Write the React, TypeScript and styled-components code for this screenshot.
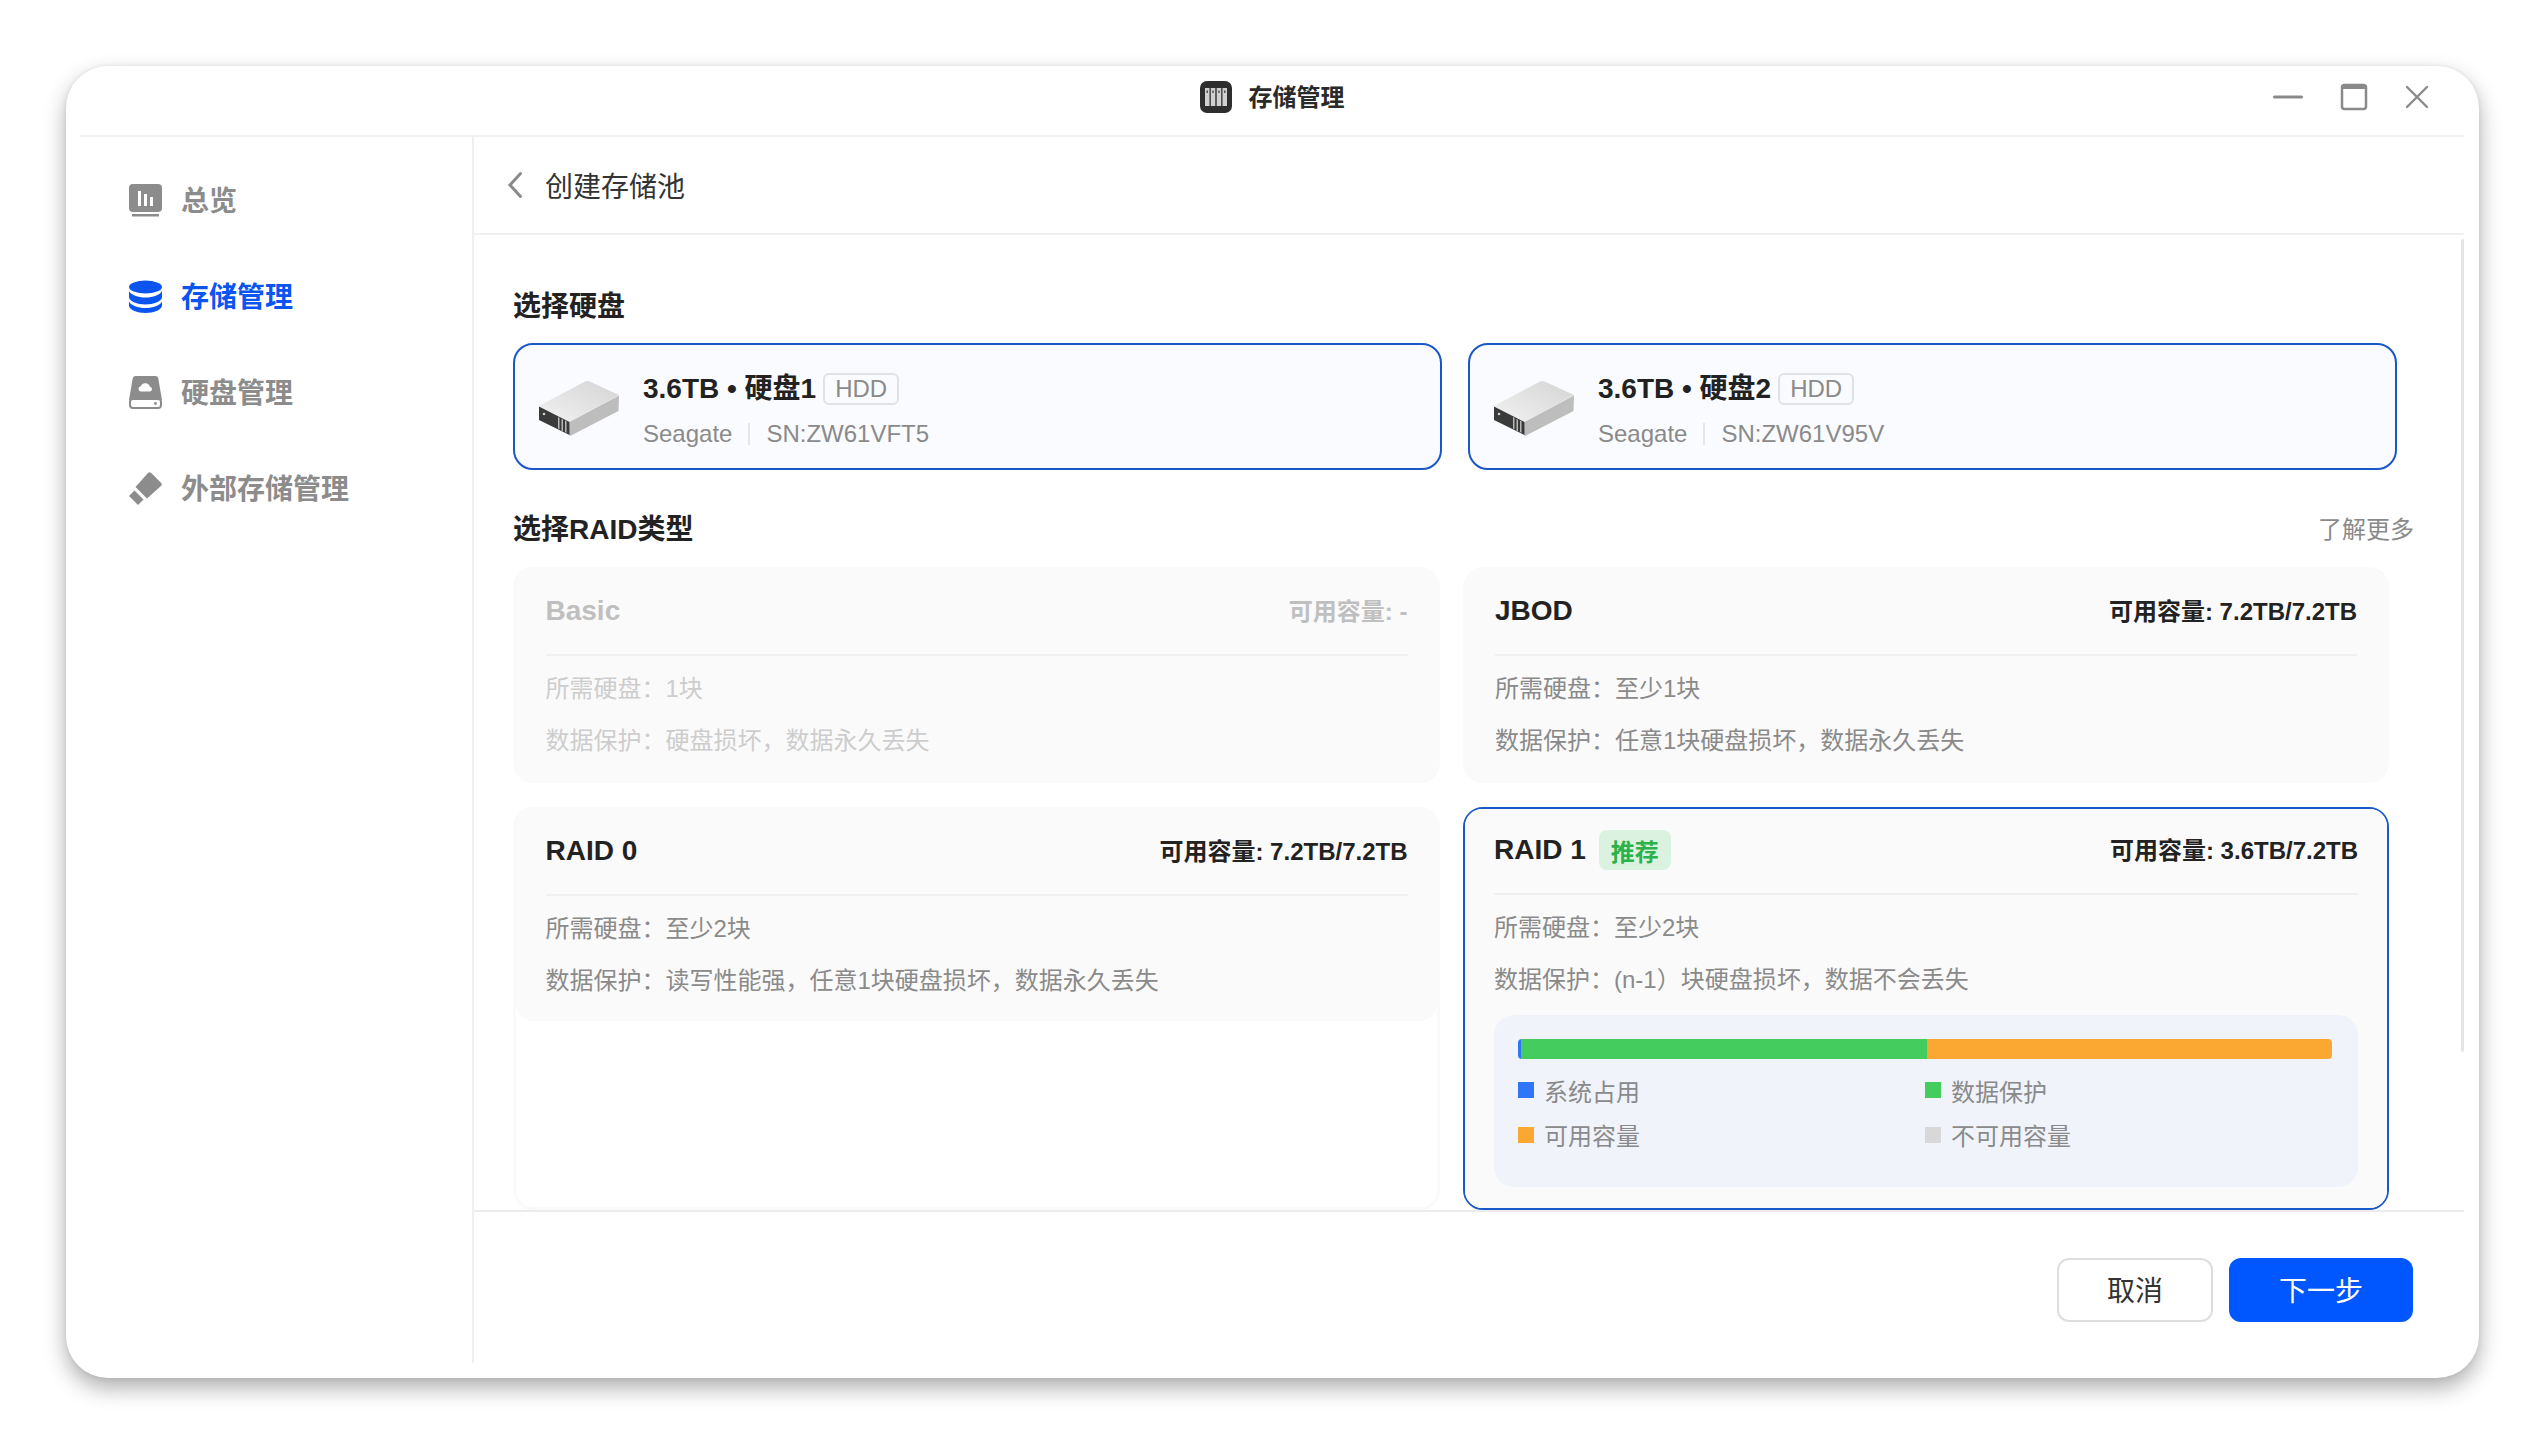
import React from 'react';
import styled, { createGlobalStyle } from 'styled-components';

const GlobalStyle = createGlobalStyle`
  html, body {
    margin: 0;
    background: #fff;
  }
  * {
    box-sizing: border-box;
  }
  body {
    font-family: "Liberation Sans", "Noto Sans CJK SC", sans-serif;
    color: #222;
  }
`;

const Page = styled.div`
  width: 2545px;
  height: 1444px;
  padding: 66px 0 0 66px;
`;

const Window = styled.div`
  width: 2413px;
  height: 1312px;
  padding: 0 15px 15px 14px;
  display: flex;
  flex-direction: column;
  background: #fff;
  border-radius: 42px;
  box-shadow: 0 10px 22px rgba(0, 0, 0, 0.32), 0 0 4px rgba(0, 0, 0, 0.08);
`;

const TitleBar = styled.header`
  position: relative;
  height: 71px;
  flex: none;
  display: flex;
  align-items: center;
  justify-content: center;
  gap: 17px;
  padding-bottom: 7px;
  border-bottom: 2px solid #f0f0f0;
`;

const TitleText = styled.span`
  margin-bottom: 4px;
  font-size: 24px;
  font-weight: 600;
  color: #2a2a2a;
`;

const WindowControls = styled.div`
  position: absolute;
  right: 0;
  top: 16px;
  display: flex;
  align-items: center;
  gap: 37px;
  padding-right: 35px;
`;

const Columns = styled.div`
  flex: 1;
  min-height: 0;
  display: flex;
`;

const Sidebar = styled.nav`
  width: 394px;
  flex: none;
  padding: 15px 0 0 49px;
  border-right: 2px solid #f0f0f0;
`;

const NavItem = styled.div<{ $active?: boolean }>`
  height: 96px;
  display: flex;
  align-items: center;
  gap: 19px;
  font-size: 28px;
  font-weight: 600;
  color: ${(p) => (p.$active ? '#0a55f0' : '#8c8c8c')};
`;

const NavLabel = styled.span`
  margin-bottom: 3px;
`;

const Main = styled.main`
  position: relative;
  flex: 1;
  min-width: 0;
  display: flex;
  flex-direction: column;
`;

const SubHeader = styled.div`
  height: 98px;
  flex: none;
  display: flex;
  align-items: center;
  gap: 22px;
  padding: 0 0 0 33px;
  font-size: 28px;
  color: #333;
  border-bottom: 2px solid #f0f0f0;
`;

const Content = styled.div`
  height: 975px;
  flex: none;
  overflow: hidden;
  padding: 49px 50px 0 39px;
`;

const ScrollThumb = styled.div`
  position: absolute;
  right: 0;
  top: 102px;
  width: 3px;
  height: 813px;
  border-radius: 2px;
  background: #e4e4e4;
`;

const SectionHead = styled.div`
  height: 40px;
  display: flex;
  align-items: center;
  justify-content: space-between;
`;

const SectionTitle = styled.h2`
  margin: 0;
  font-size: 28px;
  font-weight: 600;
  color: #222;
`;

const LearnMore = styled.span`
  font-size: 24px;
  color: #8a8a8a;
`;

const DiskGrid = styled.div`
  display: grid;
  grid-template-columns: 1fr 1fr;
  gap: 26px;
  margin: 19px 17px 37px 0;
`;

const DiskCard = styled.div`
  height: 127px;
  display: flex;
  align-items: center;
  gap: 13px;
  padding: 6px 0 0 15px;
  background: #fafbff;
  border: 2.5px solid #1a57c8;
  border-radius: 20px;
`;

const DiskInfo = styled.div`
  display: flex;
  flex-direction: column;
  gap: 13.5px;
  margin-top: -5px;
`;

const DiskName = styled.div`
  display: flex;
  align-items: center;
  gap: 7px;
  font-size: 28px;
  font-weight: 700;
  color: #222;
`;

const TypeTag = styled.span`
  width: 76px;
  height: 32px;
  margin-top: 6px;
  display: flex;
  align-items: center;
  justify-content: center;
  font-size: 24px;
  font-weight: 400;
  color: #8a8a8a;
  border: 2px solid #e0e2e6;
  border-radius: 6px;
`;

const DiskMeta = styled.div`
  display: flex;
  align-items: center;
  font-size: 24px;
  color: #8a8a8a;
`;

const MetaDivider = styled.span`
  width: 2px;
  height: 22px;
  margin: 0 16px;
  background: #e6e6e6;
`;

const RaidGrid = styled.div`
  display: grid;
  grid-template-columns: 1fr 1fr;
  grid-template-rows: 216px 403px;
  gap: 24px 23px;
  margin: 20px 25px 0 0;
`;

const RaidCard = styled.div<{ $selected?: boolean }>`
  display: flex;
  flex-direction: column;
  background: #fff;
  border: ${(p) => (p.$selected ? '2.5px solid #1a57c8' : '3px solid #fafafa')};
  border-radius: 20px;
`;

const RaidBody = styled.div<{ $fill?: boolean }>`
  flex: ${(p) => (p.$fill ? 1 : 'none')};
  padding: 0 29px 14px 29.5px;
  background: #fafafa;
  border-radius: 17px;
`;

const RaidHead = styled.div<{ $muted?: boolean }>`
  height: 86px;
  padding-bottom: 2px;
  display: flex;
  align-items: center;
  justify-content: space-between;
  border-bottom: 2px solid #f0f0f0;
  color: ${(p) => (p.$muted ? '#bfbfbf' : '#222')};
`;

const RaidName = styled.div`
  display: flex;
  align-items: center;
  gap: 13px;
  font-size: 28px;
  font-weight: 700;
`;

const Recommend = styled.span`
  width: 72px;
  height: 40px;
  display: flex;
  align-items: center;
  justify-content: center;
  font-size: 24px;
  font-weight: 700;
  color: #2bb24c;
  background: #dcf2e0;
  border-radius: 8px;
`;

const Capacity = styled.span`
  margin-bottom: 4px;
  font-size: 24px;
  font-weight: 700;
`;

const RaidRows = styled.div`
  padding-top: 7px;
`;

const RaidRow = styled.div<{ $muted?: boolean }>`
  height: 52px;
  line-height: 52px;
  font-size: 24px;
  color: ${(p) => (p.$muted ? '#cdcdcd' : '#8a8a8a')};
`;

const UsagePanel = styled.div`
  height: 172px;
  margin-top: 9px;
  padding: 24px 26px 24px 24px;
  background: #f0f3fa;
  border-radius: 20px;
`;

const UsageBar = styled.div`
  height: 20px;
  display: flex;
  overflow: hidden;
  border-radius: 4px;
`;

const UsageSegment = styled.div<{ $color: string }>`
  background: ${(p) => p.$color};
`;

const Legend = styled.div`
  display: grid;
  grid-template-columns: 407px 1fr;
  grid-auto-rows: 44.5px;
  margin-top: 9px;
`;

const LegendItem = styled.div`
  display: flex;
  align-items: center;
  gap: 10px;
  font-size: 24px;
  color: #8a8a8a;
`;

const LegendSwatch = styled.i<{ $color: string }>`
  width: 16px;
  height: 16px;
  background: ${(p) => p.$color};
`;

const Footer = styled.footer`
  flex: 1;
  display: flex;
  justify-content: flex-end;
  gap: 16px;
  padding: 46px 51px 0 0;
  border-top: 2px solid #ececec;
`;

const Button = styled.button<{ $primary?: boolean }>`
  width: ${(p) => (p.$primary ? '184px' : '156px')};
  height: 64px;
  padding: 0 0 3px;
  font-family: inherit;
  font-size: 28px;
  color: ${(p) => (p.$primary ? '#fff' : '#333')};
  background: ${(p) => (p.$primary ? '#0057ff' : '#fff')};
  border: ${(p) => (p.$primary ? 'none' : '2px solid #dedede')};
  border-radius: 12px;
`;

const OverviewIcon = () => (
  <svg width="33" height="33" viewBox="0 0 33 33">
    <rect width="33" height="28" rx="4" fill="#8c8c8c" />
    <path d="M9 7h3v15H9zM15 10h3v12h-3zM21 13h3v9h-3z" fill="#fff" />
    <rect x="3" y="30" width="27" height="2.5" fill="#8c8c8c" />
  </svg>
);

const StorageIcon = () => (
  <svg width="33" height="33" viewBox="0 0 33 33" fill="#0a55f0">
    <ellipse cx="16.5" cy="7" rx="16.5" ry="6.5" />
    <path d="M0 11c2 4 9 6.500 16.500 6.500S31 15 33 11v6.500c-1 4-8 7-16.500 7S1 21.500 0 17.500z" />
    <path d="M0 21.500c2 4 9 6.500 16.500 6.500S31 25.500 33 21.500V26c-1 4-8 7-16.500 7S1 30 0 26z" />
  </svg>
);

const DiskIcon = () => (
  <svg width="33" height="33" viewBox="0 0 33 33">
    <path d="M6.500 0h20c1.500 0 2.500 1 2.800 2.500L33 24H0L3.700 2.500C4 1 5 0 6.500 0z" fill="#8c8c8c" />
    <path d="M11.500 15.500a2.700 2.700 0 0 1 .3-5.300 4.800 4.800 0 0 1 9.100.6 2.400 2.400 0 0 1 .3 4.700z" fill="#fff" />
    <rect x="1" y="23" width="31" height="9" rx="3" fill="#fff" stroke="#8c8c8c" strokeWidth="2" />
    <circle cx="26.500" cy="27.500" r="1.400" fill="#8c8c8c" />
  </svg>
);

const UsbIcon = () => (
  <svg width="33" height="33" viewBox="0 0 33 33" fill="#8c8c8c">
    <path d="M22 0.800 32.200 11c.8.800.8 2 0 2.800L18 26.500 6.500 15 19.200.800c.8-.8 2-.8 2.800 0z" />
    <path d="M5.500 18.500 14.500 27.500 9 33 0 24z" />
  </svg>
);

const AppIcon = () => (
  <svg width="32" height="32" viewBox="0 0 32 32">
    <rect width="32" height="32" rx="7" fill="#2e2e2e" />
    <path d="M5 7h4.500v18H5zM10.800 7h4.500v18h-4.500zM16.700 7h4.500v18h-4.500zM22.500 7H27v18h-4.500z" fill="#d0d0d0" />
    <path d="M6.500 9.500h1.500v2.500H6.500zM12.300 9.500h1.500v2.500h-1.500zM18.200 9.500h1.500v2.500h-1.500zM24 9.500h1.500v2.500H24z" fill="#555" />
  </svg>
);

const MinimizeIcon = () => (
  <svg width="30" height="30" viewBox="0 0 30 30">
    <path d="M1.500 15h27" stroke="#8a8a8a" strokeWidth="3" strokeLinecap="round" />
  </svg>
);

const MaximizeIcon = () => (
  <svg width="28" height="30" viewBox="0 0 28 30">
    <rect x="2" y="3" width="24" height="24" rx="2.500" fill="none" stroke="#8a8a8a" strokeWidth="2.500" />
    <rect x="2" y="3" width="24" height="4" fill="#8a8a8a" />
  </svg>
);

const CloseIcon = () => (
  <svg width="24" height="30" viewBox="0 0 24 30">
    <path d="M2 5l20 20M22 5L2 25" stroke="#8a8a8a" strokeWidth="2.400" strokeLinecap="round" />
  </svg>
);

const BackIcon = () => (
  <svg width="16" height="28" viewBox="0 0 16 28">
    <path d="M13.500 2.500 3 14l10.500 11.500" fill="none" stroke="#8a8a8a" strokeWidth="3" strokeLinecap="round" />
  </svg>
);

const DriveImage = () => (
  <svg width="100" height="70" viewBox="0 0 100 70">
    <defs>
      <linearGradient id="driveTop" x1="0" y1="1" x2="1" y2="0">
        <stop offset="0" stopColor="#f2f2f2" />
        <stop offset="1" stopColor="#d4d4d4" />
      </linearGradient>
    </defs>
    <path d="M9 31 55 6.500c1.500-.8 3-.8 4.500 0L89 20 39.500 47z" fill="url(#driveTop)" />
    <path d="M39.500 47 89 20.500 88.500 36 41 60.500c-1.500.5-2 .3-2-1z" fill="#bdbdbd" />
    <path d="M9 31.500 39.500 47v13L9 45z" fill="#3a3a3a" />
    <path d="M28 42l1.500.8v11.500l-1.500-.8zM31.500 44l1.500.8v11.500l-1.500-.8zM35 45.500l1.500.8v11.500l-1.500-.8z" fill="#b8b8b8" />
    <circle cx="14" cy="39" r="1.300" fill="#cfcfcf" />
  </svg>
);

const disks = [
  { name: '3.6TB • 硬盘1', sn: 'SN:ZW61VFT5' },
  { name: '3.6TB • 硬盘2', sn: 'SN:ZW61V95V' },
];

const legend = [
  { label: '系统占用', color: '#2f76f6' },
  { label: '数据保护', color: '#45cc5e' },
  { label: '可用容量', color: '#fba833' },
  { label: '不可用容量', color: '#d8d8d8' },
];

const App: React.FunctionComponent = () => (
  <>
    <GlobalStyle />
    <Page>
      <Window>
        <TitleBar>
          <AppIcon />
          <TitleText>存储管理</TitleText>
          <WindowControls>
            <MinimizeIcon />
            <MaximizeIcon />
            <CloseIcon />
          </WindowControls>
        </TitleBar>
        <Columns>
          <Sidebar>
            <NavItem>
              <OverviewIcon />
              <NavLabel>总览</NavLabel>
            </NavItem>
            <NavItem $active>
              <StorageIcon />
              <NavLabel>存储管理</NavLabel>
            </NavItem>
            <NavItem>
              <DiskIcon />
              <NavLabel>硬盘管理</NavLabel>
            </NavItem>
            <NavItem>
              <UsbIcon />
              <NavLabel>外部存储管理</NavLabel>
            </NavItem>
          </Sidebar>
          <Main>
            <SubHeader>
              <BackIcon />
              创建存储池
            </SubHeader>
            <ScrollThumb />
            <Content>
              <SectionHead>
                <SectionTitle>选择硬盘</SectionTitle>
              </SectionHead>
              <DiskGrid>
                {disks.map((disk) => (
                  <DiskCard key={disk.sn}>
                    <DriveImage />
                    <DiskInfo>
                      <DiskName>
                        {disk.name}
                        <TypeTag>HDD</TypeTag>
                      </DiskName>
                      <DiskMeta>
                        Seagate
                        <MetaDivider />
                        {disk.sn}
                      </DiskMeta>
                    </DiskInfo>
                  </DiskCard>
                ))}
              </DiskGrid>
              <SectionHead>
                <SectionTitle>选择RAID类型</SectionTitle>
                <LearnMore>了解更多</LearnMore>
              </SectionHead>
              <RaidGrid>
                <RaidCard>
                  <RaidBody $fill>
                    <RaidHead $muted>
                      <RaidName>Basic</RaidName>
                      <Capacity>可用容量: -</Capacity>
                    </RaidHead>
                    <RaidRows>
                      <RaidRow $muted>所需硬盘：1块</RaidRow>
                      <RaidRow $muted>数据保护：硬盘损坏，数据永久丢失</RaidRow>
                    </RaidRows>
                  </RaidBody>
                </RaidCard>
                <RaidCard>
                  <RaidBody $fill>
                    <RaidHead>
                      <RaidName>JBOD</RaidName>
                      <Capacity>可用容量: 7.2TB/7.2TB</Capacity>
                    </RaidHead>
                    <RaidRows>
                      <RaidRow>所需硬盘：至少1块</RaidRow>
                      <RaidRow>数据保护：任意1块硬盘损坏，数据永久丢失</RaidRow>
                    </RaidRows>
                  </RaidBody>
                </RaidCard>
                <RaidCard>
                  <RaidBody>
                    <RaidHead>
                      <RaidName>RAID 0</RaidName>
                      <Capacity>可用容量: 7.2TB/7.2TB</Capacity>
                    </RaidHead>
                    <RaidRows>
                      <RaidRow>所需硬盘：至少2块</RaidRow>
                      <RaidRow>数据保护：读写性能强，任意1块硬盘损坏，数据永久丢失</RaidRow>
                    </RaidRows>
                  </RaidBody>
                </RaidCard>
                <RaidCard $selected>
                  <RaidBody $fill>
                    <RaidHead>
                      <RaidName>
                        RAID 1<Recommend>推荐</Recommend>
                      </RaidName>
                      <Capacity>可用容量: 3.6TB/7.2TB</Capacity>
                    </RaidHead>
                    <RaidRows>
                      <RaidRow>所需硬盘：至少2块</RaidRow>
                      <RaidRow>数据保护：(n-1）块硬盘损坏，数据不会丢失</RaidRow>
                    </RaidRows>
                    <UsagePanel>
                      <UsageBar>
                        <UsageSegment $color="#2f76f6" style={{ width: 3 }} />
                        <UsageSegment $color="#45cc5e" style={{ width: 406 }} />
                        <UsageSegment $color="#fba833" style={{ flex: 1 }} />
                      </UsageBar>
                      <Legend>
                        {legend.map((item) => (
                          <LegendItem key={item.label}>
                            <LegendSwatch $color={item.color} />
                            {item.label}
                          </LegendItem>
                        ))}
                      </Legend>
                    </UsagePanel>
                  </RaidBody>
                </RaidCard>
              </RaidGrid>
            </Content>
            <Footer>
              <Button>取消</Button>
              <Button $primary>下一步</Button>
            </Footer>
          </Main>
        </Columns>
      </Window>
    </Page>
  </>
);

export default App;
